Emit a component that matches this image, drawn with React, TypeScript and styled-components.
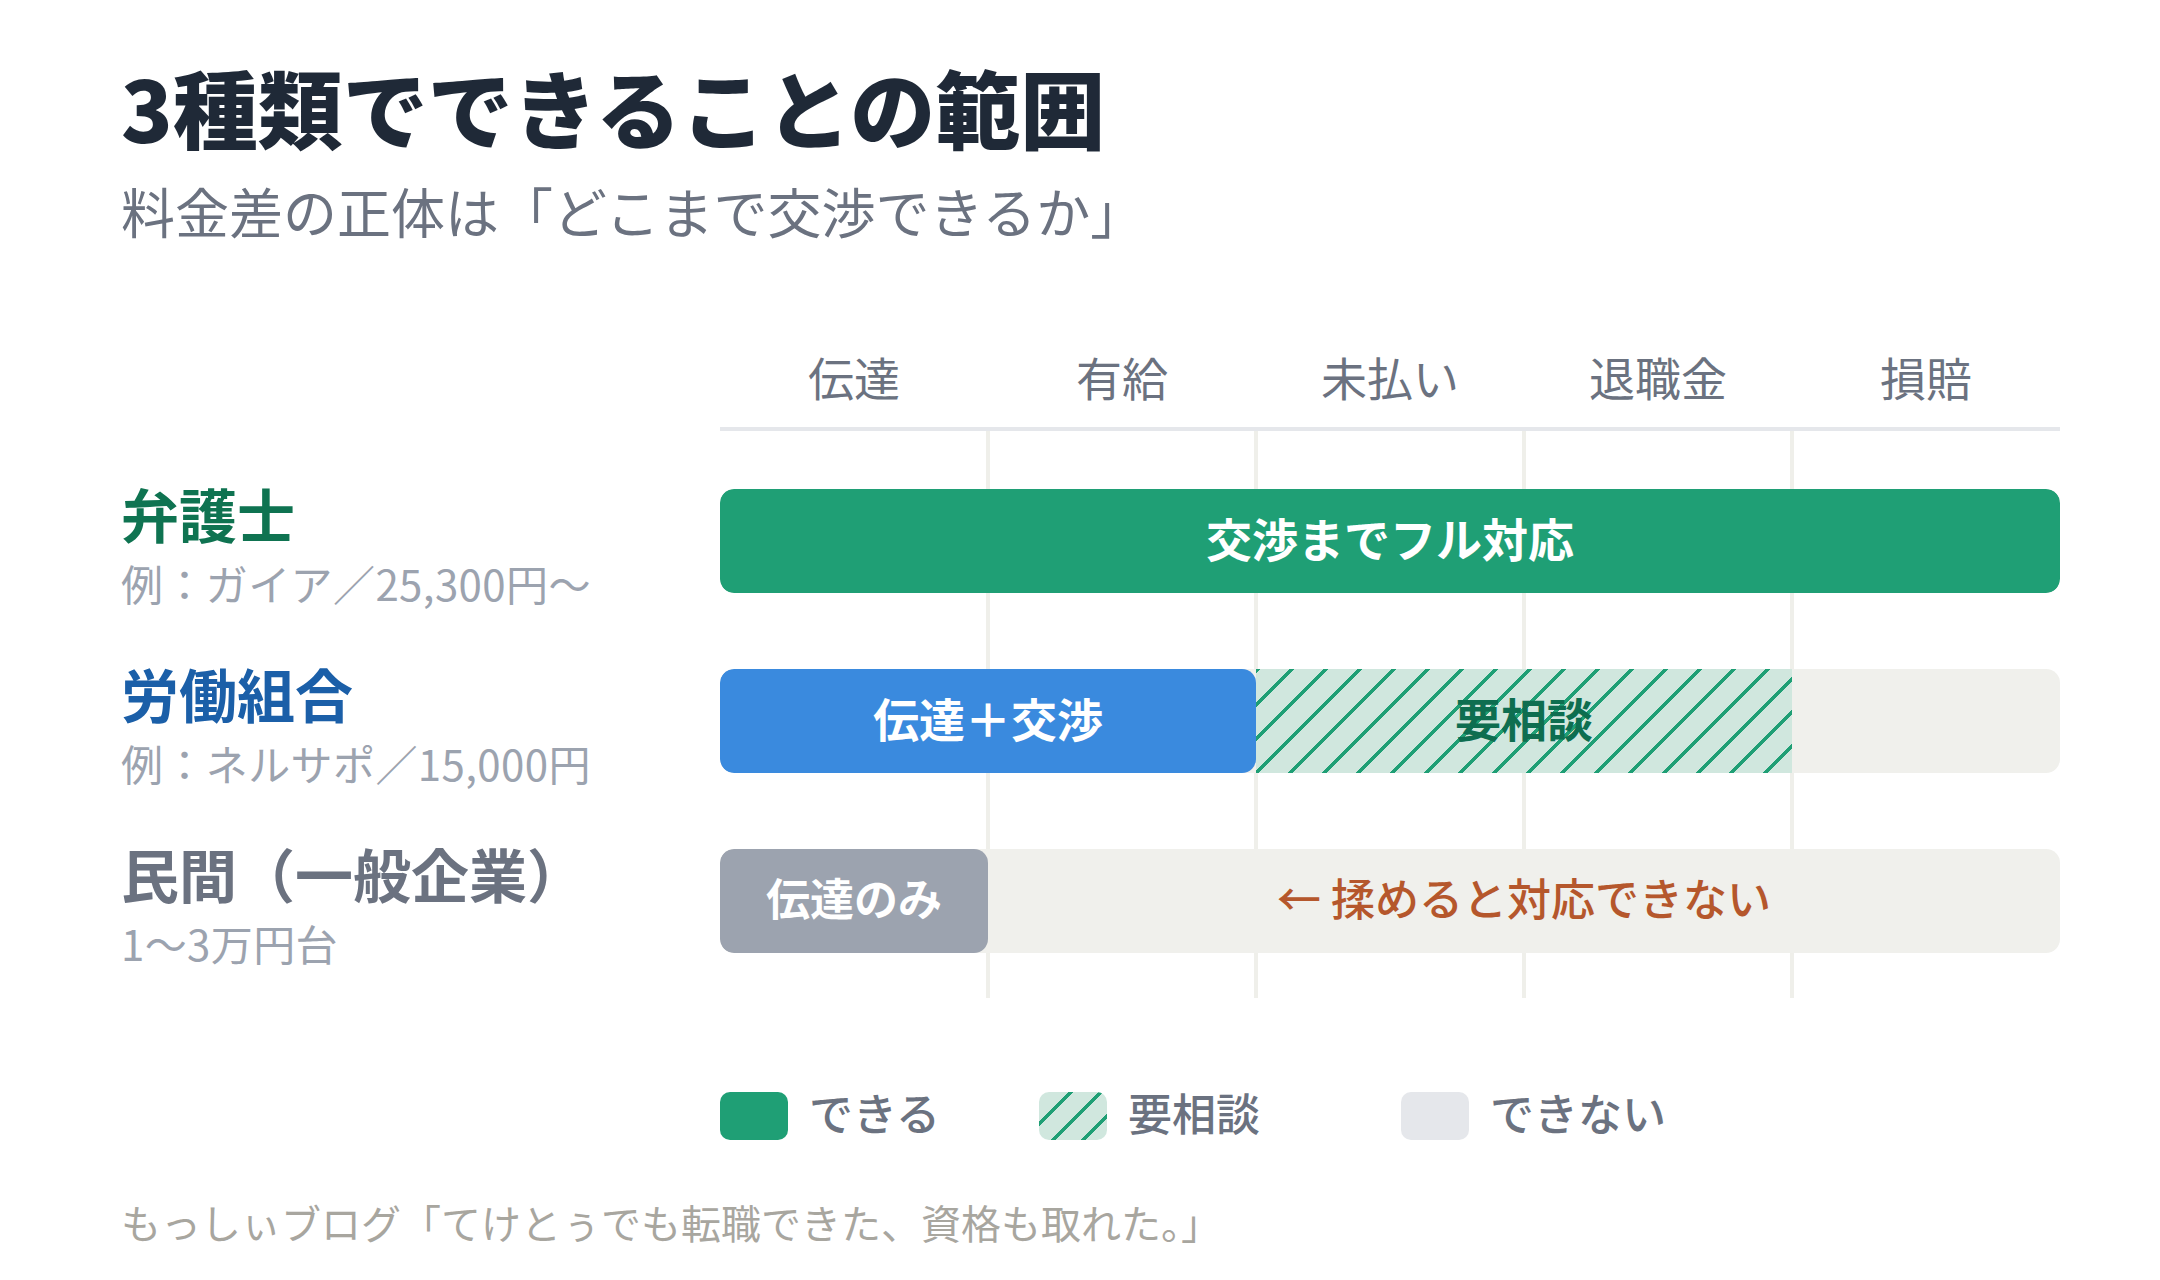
import React from 'react';
import styled, { createGlobalStyle, css } from 'styled-components';

const GlobalStyle = createGlobalStyle`
  html, body {
    margin: 0;
    padding: 0;
    background: #ffffff;
  }
  body {
    font-family: "Noto Sans CJK JP", "Noto Sans", sans-serif;
  }
`;

const FONT = `"Noto Sans CJK JP", "Noto Sans", sans-serif`;
const COL = 268;
const GREEN = '#1f9f75';
const TRACK = '#f0f0ec';
const GRID_LINE = '#efefea';

const Page = styled.main`
  width: 2160px;
  min-height: 1280px;
  box-sizing: border-box;
  padding: 56px 0 0 121px;
  font-family: ${FONT};
`;

const Title = styled.h1`
  margin: 0;
  font-size: 85px;
  line-height: 100px;
  font-weight: 900;
  color: #1f2937;
`;

const Subtitle = styled.p`
  margin: 23px 0 0;
  font-size: 54px;
  line-height: 64px;
  font-weight: 400;
  color: #6b7280;
`;

const ChartHead = styled.div`
  display: flex;
  margin-top: 105px;
`;

const LabelSpacer = styled.div`
  width: 599px;
  flex: none;
`;

const HeadGrid = styled.div`
  width: ${COL * 5}px;
  display: grid;
  grid-template-columns: repeat(5, 1fr);
  border-bottom: 4px solid #e5e7eb;
`;

const HeadCell = styled.div`
  text-align: center;
  font-size: 46px;
  line-height: 56px;
  padding-bottom: 23px;
  color: #6b7280;
  font-weight: 400;
`;

const ChartBody = styled.div`
  display: flex;
`;

const LabelColumn = styled.div`
  width: 599px;
  flex: none;
  display: flex;
  flex-direction: column;
  gap: 76px;
  padding: 58px 0 45px;
  box-sizing: border-box;
`;

const gridLine = (x: number) =>
  `linear-gradient(${GRID_LINE}, ${GRID_LINE}) ${x}px 0 / 4px 100% no-repeat`;

const BarColumn = styled.div`
  width: ${COL * 5}px;
  flex: none;
  display: flex;
  flex-direction: column;
  gap: 76px;
  padding: 58px 0 45px;
  box-sizing: border-box;
  background: ${gridLine(COL - 2)}, ${gridLine(COL * 2 - 2)}, ${gridLine(COL * 3 - 2)},
    ${gridLine(COL * 4 - 2)};
`;

type Tone = 'lawyer' | 'union' | 'private';

const toneColor: Record<Tone, string> = {
  lawyer: '#0f7351',
  union: '#1b5fa8',
  private: '#6b7280',
};

const LabelCell = styled.div`
  height: 104px;
  box-sizing: border-box;
  padding-top: 6px;
  display: flex;
  flex-direction: column;
  justify-content: center;
`;

const LabelName = styled.div<{ $tone: Tone }>`
  font-size: 58px;
  line-height: 70px;
  font-weight: 700;
  white-space: nowrap;
  color: ${(p) => toneColor[p.$tone]};
`;

const LabelNote = styled.div`
  margin-top: 8px;
  font-size: 42px;
  line-height: 54px;
  font-weight: 400;
  letter-spacing: 0.4px;
  white-space: nowrap;
  color: #9ca3af;
`;

const Track = styled.div`
  height: 104px;
  display: flex;
  border-radius: 14px;
  background: ${TRACK};
  overflow: hidden;
`;

type Variant = 'full' | 'blue' | 'hatch' | 'gray' | 'none';

const variantStyle: Record<Variant, ReturnType<typeof css>> = {
  full: css`
    background: ${GREEN};
    color: #ffffff;
    border-radius: 14px;
  `,
  blue: css`
    background: #3a8ade;
    color: #ffffff;
    border-radius: 14px;
  `,
  hatch: css`
    background: repeating-linear-gradient(
      135deg,
      ${GREEN} 0 3.5px,
      #d0e7de 3.5px 24px
    );
    color: #0e6e50;
  `,
  gray: css`
    background: #9ca3af;
    color: #ffffff;
    border-radius: 14px;
    font-size: 44px;
  `,
  none: css`
    background: transparent;
    color: #b5572c;
    font-weight: 500;
    font-size: 44px;
  `,
};

const Segment = styled.div<{ $span: number; $variant: Variant }>`
  width: ${(p) => p.$span * 20}%;
  flex: none;
  box-sizing: border-box;
  padding-bottom: 8px;
  display: flex;
  align-items: center;
  justify-content: center;
  font-size: 46px;
  font-weight: 700;
  white-space: nowrap;
  ${(p) => variantStyle[p.$variant]}
`;

const Legend = styled.div`
  display: grid;
  grid-template-columns: 319px 362px auto;
  margin: 90px 0 0 599px;
  height: 48px;
`;

const LegendItem = styled.div`
  display: flex;
  align-items: center;
  gap: 21px;
`;

type SwatchKind = 'can' | 'ask' | 'cannot';

const swatchBg: Record<SwatchKind, string> = {
  can: GREEN,
  ask: `repeating-linear-gradient(135deg, ${GREEN} 0 3.5px, #d0e7de 3.5px 21px)`,
  cannot: '#e5e7eb',
};

const Swatch = styled.span<{ $kind: SwatchKind }>`
  width: 68px;
  height: 48px;
  flex: none;
  border-radius: 10px;
  background: ${(p) => swatchBg[p.$kind]};
`;

const LegendText = styled.span`
  font-size: 44px;
  line-height: 48px;
  padding-bottom: 8px;
  font-weight: 500;
  color: #6b7280;
  white-space: nowrap;
`;

const Footer = styled.p`
  margin: 62px 0 0;
  font-size: 40px;
  line-height: 48px;
  color: #a8a69f;
  font-weight: 400;
`;

const heads = ['伝達', '有給', '未払い', '退職金', '損賠'];

const labels: { name: string; note: string; tone: Tone }[] = [
  { name: '弁護士', note: '例：ガイア／25,300円～', tone: 'lawyer' },
  { name: '労働組合', note: '例：ネルサポ／15,000円', tone: 'union' },
  { name: '民間（一般企業）', note: '1～3万円台', tone: 'private' },
];

const rows: { span: number; variant: Variant; text?: string }[][] = [
  [{ span: 5, variant: 'full', text: '交渉までフル対応' }],
  [
    { span: 2, variant: 'blue', text: '伝達＋交渉' },
    { span: 2, variant: 'hatch', text: '要相談' },
  ],
  [
    { span: 1, variant: 'gray', text: '伝達のみ' },
    { span: 4, variant: 'none', text: '← 揉めると対応できない' },
  ],
];

const legend: { kind: SwatchKind; text: string }[] = [
  { kind: 'can', text: 'できる' },
  { kind: 'ask', text: '要相談' },
  { kind: 'cannot', text: 'できない' },
];

export default function App() {
  return (
    <>
      <GlobalStyle />
      <Page>
        <Title>3種類でできることの範囲</Title>
        <Subtitle>料金差の正体は「どこまで交渉できるか」</Subtitle>

        <ChartHead>
          <LabelSpacer />
          <HeadGrid>
            {heads.map((h) => (
              <HeadCell key={h}>{h}</HeadCell>
            ))}
          </HeadGrid>
        </ChartHead>

        <ChartBody>
          <LabelColumn>
            {labels.map((l) => (
              <LabelCell key={l.name}>
                <LabelName $tone={l.tone}>{l.name}</LabelName>
                <LabelNote>{l.note}</LabelNote>
              </LabelCell>
            ))}
          </LabelColumn>
          <BarColumn>
            {rows.map((segs, i) => (
              <Track key={i}>
                {segs.map((s, j) => (
                  <Segment key={j} $span={s.span} $variant={s.variant}>
                    {s.text}
                  </Segment>
                ))}
              </Track>
            ))}
          </BarColumn>
        </ChartBody>

        <Legend>
          {legend.map((l) => (
            <LegendItem key={l.kind}>
              <Swatch $kind={l.kind} />
              <LegendText>{l.text}</LegendText>
            </LegendItem>
          ))}
        </Legend>

        <Footer>もっしぃブログ「てけとぅでも転職できた、資格も取れた。」</Footer>
      </Page>
    </>
  );
}
